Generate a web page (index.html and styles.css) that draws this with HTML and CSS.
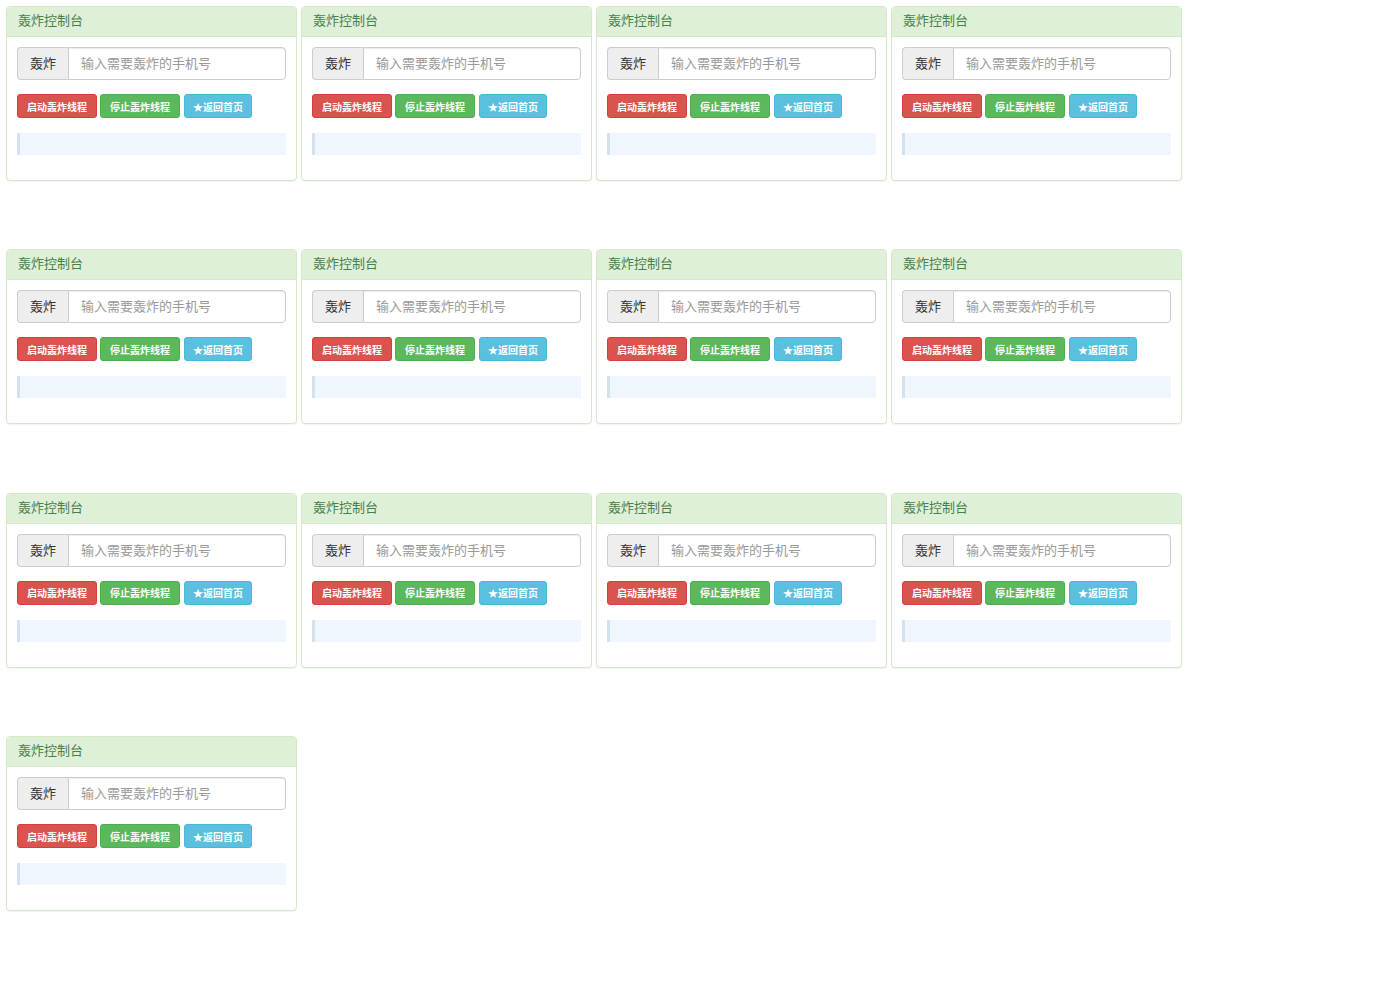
FILE: index.html
```html
<!DOCTYPE html>
<html lang="zh-CN">
<head>
<meta charset="UTF-8">
<meta name="viewport" content="width=device-width, initial-scale=1.0">
<title>轰炸控制台</title>
<link rel="stylesheet" href="styles.css">
</head>
<body>

<div class="grid">

    <div class="panel">
        <div class="panel-heading">轰炸控制台</div>
        <div class="panel-body">
            <div class="input-group">
                <span class="addon">轰炸</span>
                <input type="text" placeholder="输入需要轰炸的手机号">
            </div>
            <div class="btns">
                <button class="btn btn-red">启动轰炸线程</button>
                <button class="btn btn-green">停止轰炸线程</button>
                <button class="btn btn-blue">★返回首页</button>
            </div>
            <div class="log"></div>
        </div>
    </div>

    <div class="panel">
        <div class="panel-heading">轰炸控制台</div>
        <div class="panel-body">
            <div class="input-group">
                <span class="addon">轰炸</span>
                <input type="text" placeholder="输入需要轰炸的手机号">
            </div>
            <div class="btns">
                <button class="btn btn-red">启动轰炸线程</button>
                <button class="btn btn-green">停止轰炸线程</button>
                <button class="btn btn-blue">★返回首页</button>
            </div>
            <div class="log"></div>
        </div>
    </div>

    <div class="panel">
        <div class="panel-heading">轰炸控制台</div>
        <div class="panel-body">
            <div class="input-group">
                <span class="addon">轰炸</span>
                <input type="text" placeholder="输入需要轰炸的手机号">
            </div>
            <div class="btns">
                <button class="btn btn-red">启动轰炸线程</button>
                <button class="btn btn-green">停止轰炸线程</button>
                <button class="btn btn-blue">★返回首页</button>
            </div>
            <div class="log"></div>
        </div>
    </div>

    <div class="panel">
        <div class="panel-heading">轰炸控制台</div>
        <div class="panel-body">
            <div class="input-group">
                <span class="addon">轰炸</span>
                <input type="text" placeholder="输入需要轰炸的手机号">
            </div>
            <div class="btns">
                <button class="btn btn-red">启动轰炸线程</button>
                <button class="btn btn-green">停止轰炸线程</button>
                <button class="btn btn-blue">★返回首页</button>
            </div>
            <div class="log"></div>
        </div>
    </div>

    <div class="panel">
        <div class="panel-heading">轰炸控制台</div>
        <div class="panel-body">
            <div class="input-group">
                <span class="addon">轰炸</span>
                <input type="text" placeholder="输入需要轰炸的手机号">
            </div>
            <div class="btns">
                <button class="btn btn-red">启动轰炸线程</button>
                <button class="btn btn-green">停止轰炸线程</button>
                <button class="btn btn-blue">★返回首页</button>
            </div>
            <div class="log"></div>
        </div>
    </div>

    <div class="panel">
        <div class="panel-heading">轰炸控制台</div>
        <div class="panel-body">
            <div class="input-group">
                <span class="addon">轰炸</span>
                <input type="text" placeholder="输入需要轰炸的手机号">
            </div>
            <div class="btns">
                <button class="btn btn-red">启动轰炸线程</button>
                <button class="btn btn-green">停止轰炸线程</button>
                <button class="btn btn-blue">★返回首页</button>
            </div>
            <div class="log"></div>
        </div>
    </div>

    <div class="panel">
        <div class="panel-heading">轰炸控制台</div>
        <div class="panel-body">
            <div class="input-group">
                <span class="addon">轰炸</span>
                <input type="text" placeholder="输入需要轰炸的手机号">
            </div>
            <div class="btns">
                <button class="btn btn-red">启动轰炸线程</button>
                <button class="btn btn-green">停止轰炸线程</button>
                <button class="btn btn-blue">★返回首页</button>
            </div>
            <div class="log"></div>
        </div>
    </div>

    <div class="panel">
        <div class="panel-heading">轰炸控制台</div>
        <div class="panel-body">
            <div class="input-group">
                <span class="addon">轰炸</span>
                <input type="text" placeholder="输入需要轰炸的手机号">
            </div>
            <div class="btns">
                <button class="btn btn-red">启动轰炸线程</button>
                <button class="btn btn-green">停止轰炸线程</button>
                <button class="btn btn-blue">★返回首页</button>
            </div>
            <div class="log"></div>
        </div>
    </div>

    <div class="panel">
        <div class="panel-heading">轰炸控制台</div>
        <div class="panel-body">
            <div class="input-group">
                <span class="addon">轰炸</span>
                <input type="text" placeholder="输入需要轰炸的手机号">
            </div>
            <div class="btns">
                <button class="btn btn-red">启动轰炸线程</button>
                <button class="btn btn-green">停止轰炸线程</button>
                <button class="btn btn-blue">★返回首页</button>
            </div>
            <div class="log"></div>
        </div>
    </div>

    <div class="panel">
        <div class="panel-heading">轰炸控制台</div>
        <div class="panel-body">
            <div class="input-group">
                <span class="addon">轰炸</span>
                <input type="text" placeholder="输入需要轰炸的手机号">
            </div>
            <div class="btns">
                <button class="btn btn-red">启动轰炸线程</button>
                <button class="btn btn-green">停止轰炸线程</button>
                <button class="btn btn-blue">★返回首页</button>
            </div>
            <div class="log"></div>
        </div>
    </div>

    <div class="panel">
        <div class="panel-heading">轰炸控制台</div>
        <div class="panel-body">
            <div class="input-group">
                <span class="addon">轰炸</span>
                <input type="text" placeholder="输入需要轰炸的手机号">
            </div>
            <div class="btns">
                <button class="btn btn-red">启动轰炸线程</button>
                <button class="btn btn-green">停止轰炸线程</button>
                <button class="btn btn-blue">★返回首页</button>
            </div>
            <div class="log"></div>
        </div>
    </div>

    <div class="panel">
        <div class="panel-heading">轰炸控制台</div>
        <div class="panel-body">
            <div class="input-group">
                <span class="addon">轰炸</span>
                <input type="text" placeholder="输入需要轰炸的手机号">
            </div>
            <div class="btns">
                <button class="btn btn-red">启动轰炸线程</button>
                <button class="btn btn-green">停止轰炸线程</button>
                <button class="btn btn-blue">★返回首页</button>
            </div>
            <div class="log"></div>
        </div>
    </div>

    <div class="panel">
        <div class="panel-heading">轰炸控制台</div>
        <div class="panel-body">
            <div class="input-group">
                <span class="addon">轰炸</span>
                <input type="text" placeholder="输入需要轰炸的手机号">
            </div>
            <div class="btns">
                <button class="btn btn-red">启动轰炸线程</button>
                <button class="btn btn-green">停止轰炸线程</button>
                <button class="btn btn-blue">★返回首页</button>
            </div>
            <div class="log"></div>
        </div>
    </div>

</div>

</body>
</html>
```

FILE: styles.css
```css
body {
    margin: 0;
    padding: 6px;
    font-family: "Noto Sans CJK SC", "Liberation Sans", sans-serif;
    font-size: 13px;
    color: #333;
    background: #fff;
}

.grid {
    display: grid;
    grid-template-columns: repeat(4, 291px);
    column-gap: 4px;
    row-gap: 68.4px;
}

/* panel, bootstrap panel-success look */
.panel {
    box-sizing: border-box;
    height: 175px;
    border: 1px solid #d6e9c6;
    border-radius: 4px;
    background: #fff;
    box-shadow: 0 1px 1px rgba(0, 0, 0, 0.05);
}

.panel-heading {
    height: 29px;
    line-height: 26px;
    padding: 0 11px;
    background-color: #dff0d8;
    border-bottom: 1px solid #d6e9c6;
    border-radius: 3px 3px 0 0;
    color: #4a7f4a;
    font-size: 13px;
}

.panel-body {
    padding: 10px 10px 0 10px;
}

.input-group {
    display: flex;
    height: 33px;
}

.addon {
    box-sizing: border-box;
    width: 51px;
    line-height: 30px;
    text-align: center;
    background-color: #eee;
    border: 1px solid #ccc;
    border-right: 0;
    border-radius: 4px 0 0 4px;
    color: #333;
    font-size: 13px;
}

.input-group input {
    flex: 1;
    min-width: 0;
    box-sizing: border-box;
    margin: 0;
    padding: 0 12px 2px 12px;
    border: 1px solid #ccc;
    border-radius: 0 4px 4px 0;
    font-family: inherit;
    font-size: 13px;
    color: #555;
    box-shadow: inset 0 1px 1px rgba(0, 0, 0, 0.075);
}

.input-group input::placeholder {
    color: #999;
}

.btns {
    display: flex;
    gap: 3px;
    margin-top: 14px;
}

.btn {
    box-sizing: border-box;
    height: 24px;
    padding: 0;
    border: 1px solid transparent;
    border-radius: 3px;
    font-family: inherit;
    font-size: 10px;
    font-weight: bold;
    line-height: 21px;
    text-align: center;
    white-space: nowrap;
    color: #fff;
    cursor: pointer;
}

.btn-red {
    width: 80px;
    background-color: #d9534f;
    border-color: #d43f3a;
}

.btn-green {
    width: 80px;
    background-color: #5cb85c;
    border-color: #4cae4c;
}

.btn-blue {
    width: 68px;
    margin-left: 1px;
    background-color: #5bc0de;
    border-color: #46b8da;
}

.log {
    height: 22px;
    margin-top: 15px;
    background-color: #eff6fd;
    border-left: 3px solid #d3e2ee;
}
```
